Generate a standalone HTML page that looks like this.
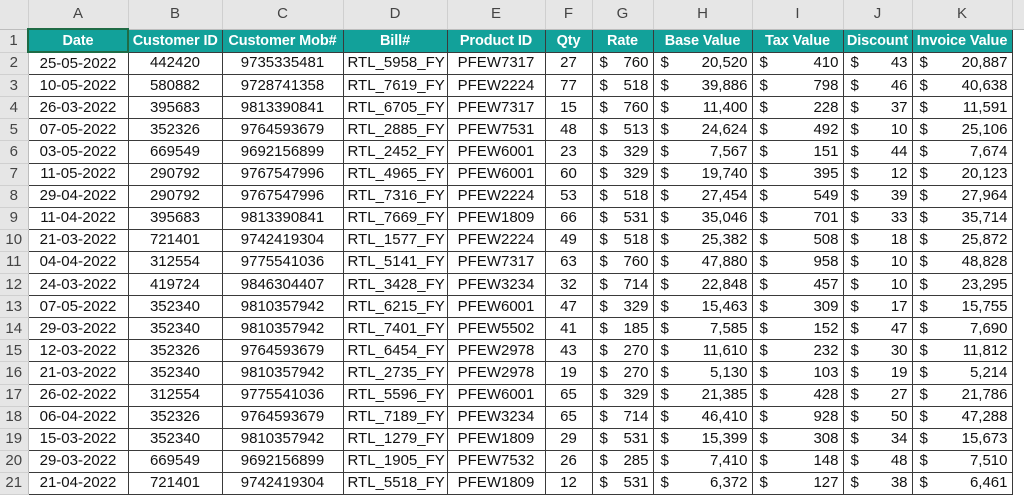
<!DOCTYPE html>
<html><head><meta charset="utf-8"><style>
body{margin:0;width:1024px;height:498px;overflow:hidden;background:#fff;font-family:"Liberation Sans",Arial,sans-serif;}
table{border-collapse:collapse;table-layout:fixed;width:1024px;}
td{padding:0 4px;height:21.1px;font-size:15px;color:#111;white-space:nowrap;overflow:hidden;border:1px solid #3a3a3a;text-align:center;line-height:20px;}
tr.ch td{height:28px;background:#e6e6e6;color:#444;border:none;border-right:1px solid #cfcfcf;border-bottom:1px solid #bdbdbd;font-size:15px;}
td.rh{background:#e6e6e6;color:#444;border:none;border-bottom:1px solid #d0d0d0;border-right:1px solid #bdbdbd;text-align:center;padding:0;font-size:15px;}
tr.h td:not(.rh){background:#12a19a;color:#fff;font-weight:bold;font-size:14.5px;padding:0;letter-spacing:-0.1px;}
td.m{text-align:right;padding:0 4px 0 7px;}
td.m span{float:left;}
tr.ch td.corner{background:#e6e6e6;}
</style></head><body>
<table>
<colgroup><col style="width:28px"><col style="width:100px"><col style="width:94px"><col style="width:121px"><col style="width:104px"><col style="width:98px"><col style="width:47px"><col style="width:61px"><col style="width:99px"><col style="width:91px"><col style="width:69px"><col style="width:100px"><col style="width:12px"></colgroup>
<tr class="ch"><td class="corner"></td><td>A</td><td>B</td><td>C</td><td>D</td><td>E</td><td>F</td><td>G</td><td>H</td><td>I</td><td>J</td><td>K</td><td></td></tr>
<tr class="h"><td class="rh">1</td><td style="border:2px solid #1f6b45">Date</td><td>Customer ID</td><td>Customer Mob#</td><td>Bill#</td><td>Product ID</td><td>Qty</td><td>Rate</td><td>Base Value</td><td>Tax Value</td><td>Discount</td><td>Invoice Value</td><td style="background:#fff;border:none"></td></tr>
<tr><td class="rh">2</td><td>25-05-2022</td><td>442420</td><td>9735335481</td><td>RTL_5958_FY</td><td>PFEW7317</td><td>27</td><td class="m"><span>$</span>760</td><td class="m"><span>$</span>20,520</td><td class="m"><span>$</span>410</td><td class="m"><span>$</span>43</td><td class="m"><span>$</span>20,887</td><td style="border:none"></td></tr>
<tr><td class="rh">3</td><td>10-05-2022</td><td>580882</td><td>9728741358</td><td>RTL_7619_FY</td><td>PFEW2224</td><td>77</td><td class="m"><span>$</span>518</td><td class="m"><span>$</span>39,886</td><td class="m"><span>$</span>798</td><td class="m"><span>$</span>46</td><td class="m"><span>$</span>40,638</td><td style="border:none"></td></tr>
<tr><td class="rh">4</td><td>26-03-2022</td><td>395683</td><td>9813390841</td><td>RTL_6705_FY</td><td>PFEW7317</td><td>15</td><td class="m"><span>$</span>760</td><td class="m"><span>$</span>11,400</td><td class="m"><span>$</span>228</td><td class="m"><span>$</span>37</td><td class="m"><span>$</span>11,591</td><td style="border:none"></td></tr>
<tr><td class="rh">5</td><td>07-05-2022</td><td>352326</td><td>9764593679</td><td>RTL_2885_FY</td><td>PFEW7531</td><td>48</td><td class="m"><span>$</span>513</td><td class="m"><span>$</span>24,624</td><td class="m"><span>$</span>492</td><td class="m"><span>$</span>10</td><td class="m"><span>$</span>25,106</td><td style="border:none"></td></tr>
<tr><td class="rh">6</td><td>03-05-2022</td><td>669549</td><td>9692156899</td><td>RTL_2452_FY</td><td>PFEW6001</td><td>23</td><td class="m"><span>$</span>329</td><td class="m"><span>$</span>7,567</td><td class="m"><span>$</span>151</td><td class="m"><span>$</span>44</td><td class="m"><span>$</span>7,674</td><td style="border:none"></td></tr>
<tr><td class="rh">7</td><td>11-05-2022</td><td>290792</td><td>9767547996</td><td>RTL_4965_FY</td><td>PFEW6001</td><td>60</td><td class="m"><span>$</span>329</td><td class="m"><span>$</span>19,740</td><td class="m"><span>$</span>395</td><td class="m"><span>$</span>12</td><td class="m"><span>$</span>20,123</td><td style="border:none"></td></tr>
<tr><td class="rh">8</td><td>29-04-2022</td><td>290792</td><td>9767547996</td><td>RTL_7316_FY</td><td>PFEW2224</td><td>53</td><td class="m"><span>$</span>518</td><td class="m"><span>$</span>27,454</td><td class="m"><span>$</span>549</td><td class="m"><span>$</span>39</td><td class="m"><span>$</span>27,964</td><td style="border:none"></td></tr>
<tr><td class="rh">9</td><td>11-04-2022</td><td>395683</td><td>9813390841</td><td>RTL_7669_FY</td><td>PFEW1809</td><td>66</td><td class="m"><span>$</span>531</td><td class="m"><span>$</span>35,046</td><td class="m"><span>$</span>701</td><td class="m"><span>$</span>33</td><td class="m"><span>$</span>35,714</td><td style="border:none"></td></tr>
<tr><td class="rh">10</td><td>21-03-2022</td><td>721401</td><td>9742419304</td><td>RTL_1577_FY</td><td>PFEW2224</td><td>49</td><td class="m"><span>$</span>518</td><td class="m"><span>$</span>25,382</td><td class="m"><span>$</span>508</td><td class="m"><span>$</span>18</td><td class="m"><span>$</span>25,872</td><td style="border:none"></td></tr>
<tr><td class="rh">11</td><td>04-04-2022</td><td>312554</td><td>9775541036</td><td>RTL_5141_FY</td><td>PFEW7317</td><td>63</td><td class="m"><span>$</span>760</td><td class="m"><span>$</span>47,880</td><td class="m"><span>$</span>958</td><td class="m"><span>$</span>10</td><td class="m"><span>$</span>48,828</td><td style="border:none"></td></tr>
<tr><td class="rh">12</td><td>24-03-2022</td><td>419724</td><td>9846304407</td><td>RTL_3428_FY</td><td>PFEW3234</td><td>32</td><td class="m"><span>$</span>714</td><td class="m"><span>$</span>22,848</td><td class="m"><span>$</span>457</td><td class="m"><span>$</span>10</td><td class="m"><span>$</span>23,295</td><td style="border:none"></td></tr>
<tr><td class="rh">13</td><td>07-05-2022</td><td>352340</td><td>9810357942</td><td>RTL_6215_FY</td><td>PFEW6001</td><td>47</td><td class="m"><span>$</span>329</td><td class="m"><span>$</span>15,463</td><td class="m"><span>$</span>309</td><td class="m"><span>$</span>17</td><td class="m"><span>$</span>15,755</td><td style="border:none"></td></tr>
<tr><td class="rh">14</td><td>29-03-2022</td><td>352340</td><td>9810357942</td><td>RTL_7401_FY</td><td>PFEW5502</td><td>41</td><td class="m"><span>$</span>185</td><td class="m"><span>$</span>7,585</td><td class="m"><span>$</span>152</td><td class="m"><span>$</span>47</td><td class="m"><span>$</span>7,690</td><td style="border:none"></td></tr>
<tr><td class="rh">15</td><td>12-03-2022</td><td>352326</td><td>9764593679</td><td>RTL_6454_FY</td><td>PFEW2978</td><td>43</td><td class="m"><span>$</span>270</td><td class="m"><span>$</span>11,610</td><td class="m"><span>$</span>232</td><td class="m"><span>$</span>30</td><td class="m"><span>$</span>11,812</td><td style="border:none"></td></tr>
<tr><td class="rh">16</td><td>21-03-2022</td><td>352340</td><td>9810357942</td><td>RTL_2735_FY</td><td>PFEW2978</td><td>19</td><td class="m"><span>$</span>270</td><td class="m"><span>$</span>5,130</td><td class="m"><span>$</span>103</td><td class="m"><span>$</span>19</td><td class="m"><span>$</span>5,214</td><td style="border:none"></td></tr>
<tr><td class="rh">17</td><td>26-02-2022</td><td>312554</td><td>9775541036</td><td>RTL_5596_FY</td><td>PFEW6001</td><td>65</td><td class="m"><span>$</span>329</td><td class="m"><span>$</span>21,385</td><td class="m"><span>$</span>428</td><td class="m"><span>$</span>27</td><td class="m"><span>$</span>21,786</td><td style="border:none"></td></tr>
<tr><td class="rh">18</td><td>06-04-2022</td><td>352326</td><td>9764593679</td><td>RTL_7189_FY</td><td>PFEW3234</td><td>65</td><td class="m"><span>$</span>714</td><td class="m"><span>$</span>46,410</td><td class="m"><span>$</span>928</td><td class="m"><span>$</span>50</td><td class="m"><span>$</span>47,288</td><td style="border:none"></td></tr>
<tr><td class="rh">19</td><td>15-03-2022</td><td>352340</td><td>9810357942</td><td>RTL_1279_FY</td><td>PFEW1809</td><td>29</td><td class="m"><span>$</span>531</td><td class="m"><span>$</span>15,399</td><td class="m"><span>$</span>308</td><td class="m"><span>$</span>34</td><td class="m"><span>$</span>15,673</td><td style="border:none"></td></tr>
<tr><td class="rh">20</td><td>29-03-2022</td><td>669549</td><td>9692156899</td><td>RTL_1905_FY</td><td>PFEW7532</td><td>26</td><td class="m"><span>$</span>285</td><td class="m"><span>$</span>7,410</td><td class="m"><span>$</span>148</td><td class="m"><span>$</span>48</td><td class="m"><span>$</span>7,510</td><td style="border:none"></td></tr>
<tr><td class="rh">21</td><td>21-04-2022</td><td>721401</td><td>9742419304</td><td>RTL_5518_FY</td><td>PFEW1809</td><td>12</td><td class="m"><span>$</span>531</td><td class="m"><span>$</span>6,372</td><td class="m"><span>$</span>127</td><td class="m"><span>$</span>38</td><td class="m"><span>$</span>6,461</td><td style="border:none"></td></tr>
</table>
</body></html>
